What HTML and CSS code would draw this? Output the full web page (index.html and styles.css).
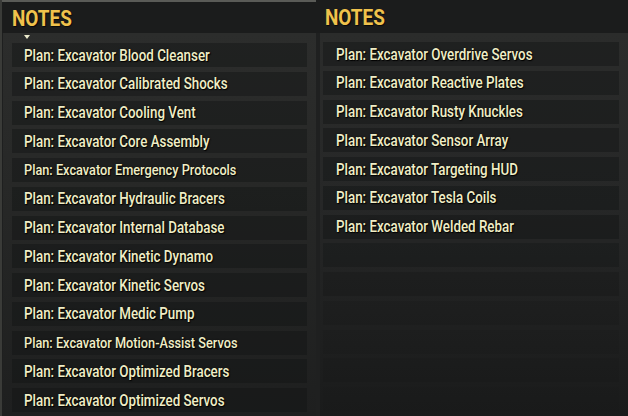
FILE: index.html
```html
<!DOCTYPE html>
<html>
<head>
<meta charset="utf-8">
<link rel="stylesheet" href="styles.css">
</head>
<body>
<div class="screen">
  <section class="panel panel-left">
    <header class="panel-head"><h1 class="title">NOTES</h1></header>
    <div class="panel-body">
      <span class="caret"></span>
      <ul class="list">
        <li class="row"><span class="label">Plan: Excavator Blood Cleanser</span></li>
        <li class="row"><span class="label">Plan: Excavator Calibrated Shocks</span></li>
        <li class="row"><span class="label">Plan: Excavator Cooling Vent</span></li>
        <li class="row"><span class="label">Plan: Excavator Core Assembly</span></li>
        <li class="row"><span class="label small">Plan: Excavator Emergency Protocols</span></li>
        <li class="row"><span class="label">Plan: Excavator Hydraulic Bracers</span></li>
        <li class="row"><span class="label">Plan: Excavator Internal Database</span></li>
        <li class="row"><span class="label">Plan: Excavator Kinetic Dynamo</span></li>
        <li class="row"><span class="label">Plan: Excavator Kinetic Servos</span></li>
        <li class="row"><span class="label">Plan: Excavator Medic Pump</span></li>
        <li class="row"><span class="label small">Plan: Excavator Motion-Assist Servos</span></li>
        <li class="row"><span class="label">Plan: Excavator Optimized Bracers</span></li>
        <li class="row"><span class="label">Plan: Excavator Optimized Servos</span></li>
      </ul>
    </div>
  </section>
  <section class="panel panel-right">
    <header class="panel-head"><h1 class="title">NOTES</h1></header>
    <div class="panel-body">
      <ul class="list">
        <li class="row"><span class="label">Plan: Excavator Overdrive Servos</span></li>
        <li class="row"><span class="label">Plan: Excavator Reactive Plates</span></li>
        <li class="row"><span class="label">Plan: Excavator Rusty Knuckles</span></li>
        <li class="row"><span class="label">Plan: Excavator Sensor Array</span></li>
        <li class="row"><span class="label">Plan: Excavator Targeting HUD</span></li>
        <li class="row"><span class="label">Plan: Excavator Tesla Coils</span></li>
        <li class="row"><span class="label">Plan: Excavator Welded Rebar</span></li>
        <li class="row empty e1"></li>
        <li class="row empty e2"></li>
        <li class="row empty e3"></li>
        <li class="row empty e4"></li>
        <li class="row empty e5"></li>
        <li class="row empty e6"></li>
      </ul>
    </div>
  </section>
</div>
</body>
</html>
```
FILE: styles.css
```css
* { box-sizing: border-box; }
html, body { margin: 0; padding: 0; }
body {
  width: 628px;
  height: 416px;
  overflow: hidden;
  background: #1b1c1c;
  font-family: Roboto, "DejaVu Sans Condensed", sans-serif;
}
.screen {
  display: grid;
  grid-template-columns: 316px 312px;
  height: 416px;
}
.panel {
  display: flex;
  flex-direction: column;
  height: 416px;
}
.panel-left {
  border-left: 2px solid #3a3b38;
}
.panel-head {
  height: 33px;
  background: #1b1c1c;
  display: flex;
  align-items: center;
}
.panel-left .panel-head {
  border-top: 2px solid #5a5b57;
  padding-left: 10px;
}
.panel-right .panel-head {
  padding-left: 9px;
}
.title {
  margin: 0;
  font-size: 22px;
  font-weight: bold;
  color: #f0c24c;
  line-height: 1;
  padding-top: 2px;
  transform: scaleX(0.86);
  transform-origin: left center;
  text-shadow: 1px 1px 1px rgba(0,0,0,0.7);
}
.panel-body {
  flex: 1;
  position: relative;
  background: linear-gradient(180deg, #2c2d2c 0%, #272827 40%, #1e1f1f 100%);
  border-left: 1px solid #1e1f1f;
}
.panel-right .panel-body {
  border-left: 4px solid #1f2020;
  background: linear-gradient(180deg, #2b2c2b 0%, #262727 45%, #1a1b1b 100%);
}
.caret {
  position: absolute;
  left: 21px;
  top: 2px;
  width: 0;
  height: 0;
  border-left: 3px solid transparent;
  border-right: 3px solid transparent;
  border-top: 4px solid #ebe9cc;
}
.list {
  list-style: none;
  margin: 0;
  padding: 10px 0 0 9px;
  display: flex;
  flex-direction: column;
  gap: 4.75px;
}
.panel-right .list {
  padding: 9px 0 0 3px;
}
.row {
  height: 24px;
  width: 295px;
  background: rgba(18, 19, 19, 0.45);
  display: flex;
  align-items: center;
  padding-left: 12px;
  flex: none;
}
.panel-right .row {
  width: 296px;
  padding-left: 13px;
}
.label {
  font-size: 16px;
  font-weight: 500;
  color: #f0eec6;
  text-shadow: 1px 1px 1px #000, 0 0 2px rgba(0,0,0,0.6);
  white-space: nowrap;
  display: inline-block;
  transform: scaleX(0.835);
  transform-origin: left center;
}
.label.small { font-size: 15px; transform: scaleX(0.85); }
.empty.e1 { background: rgba(18,19,19,0.35); }
.empty.e2 { background: rgba(18,19,19,0.28); }
.empty.e3 { background: rgba(18,19,19,0.2); }
.empty.e4 { background: rgba(18,19,19,0.15); }
.empty.e5 { background: rgba(18,19,19,0.12); }
.empty.e6 { background: rgba(18,19,19,0.1); }
```
